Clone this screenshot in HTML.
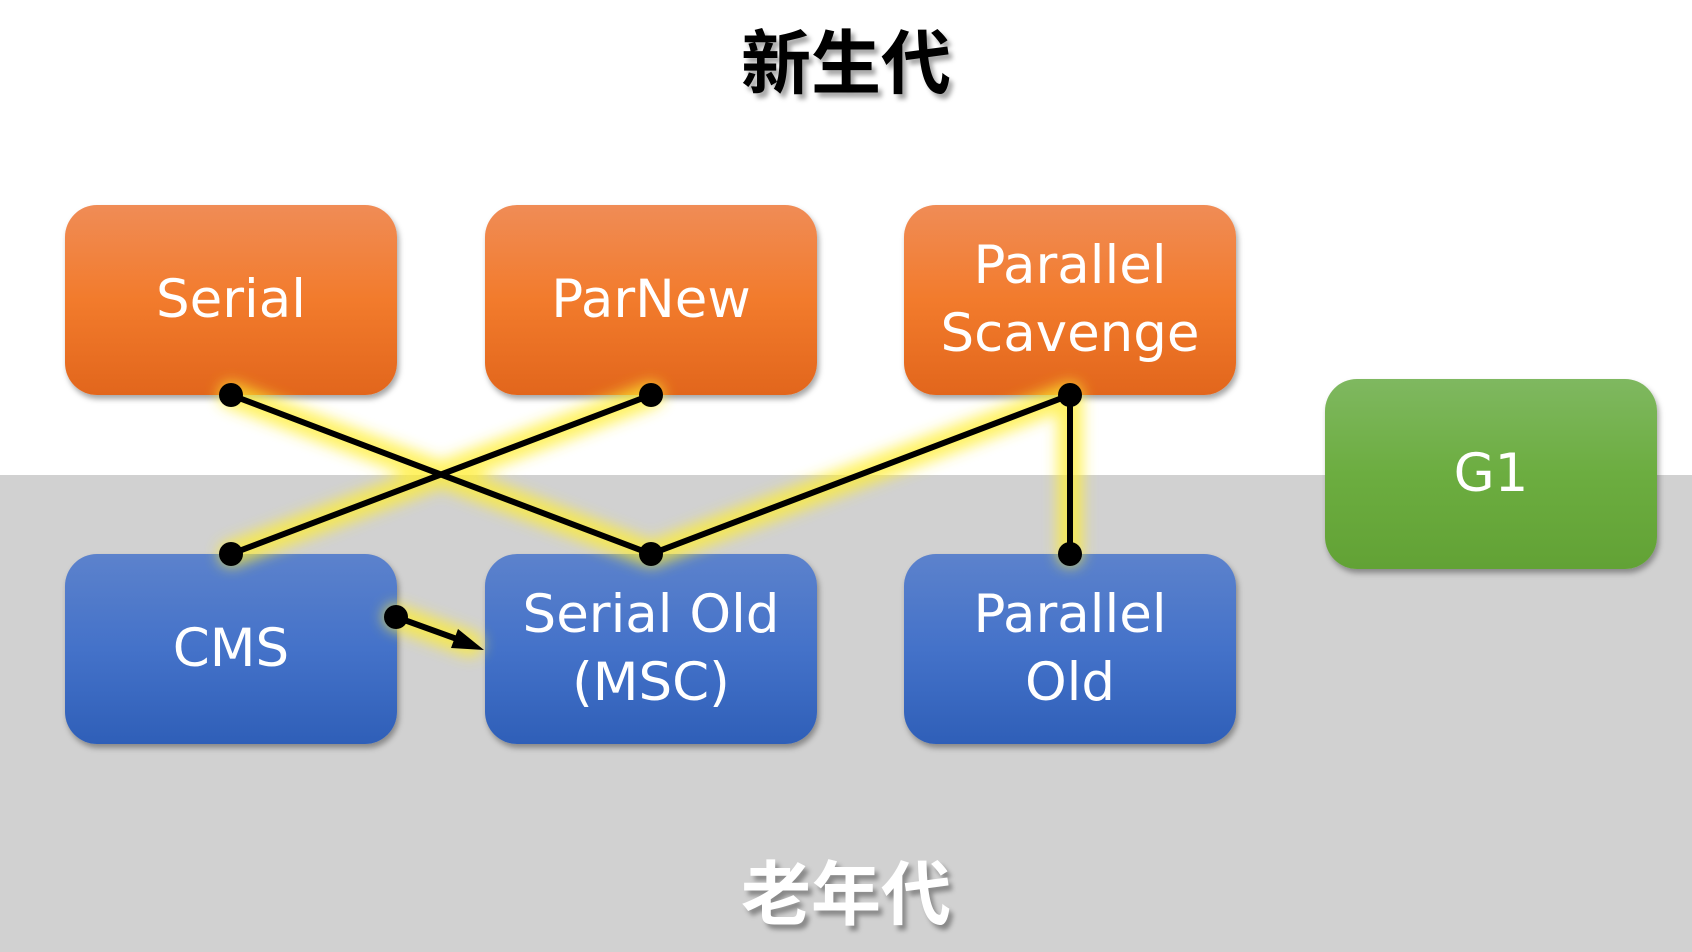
<!DOCTYPE html>
<html><head><meta charset="utf-8"><style>
*{margin:0;padding:0;box-sizing:border-box}
body{width:1692px;height:952px;position:relative;overflow:hidden;background:#fff;font-family:"Segoe UI","DejaVu Sans","Liberation Sans",sans-serif}
.gray{position:absolute;left:0;top:475px;width:1692px;height:477px;background:#d1d1d1}
.box{position:absolute;width:332px;height:190px;border-radius:32px;color:#fff;font-size:53px;line-height:68px;display:flex;align-items:center;justify-content:center;text-align:center;box-shadow:2px 4px 6px rgba(0,0,0,.35)}
.o{background:linear-gradient(#f08c56,#f27b2c 50%,#e2661c)}
.b{background:linear-gradient(#5c82cc,#4472c9 50%,#2f5fb8)}
.g{background:linear-gradient(#7fb860,#6cad40 50%,#62a235)}
.t{position:absolute;left:0;width:1692px;text-align:center;font-family:"Liberation Sans","Noto Sans CJK SC",sans-serif;font-weight:bold;font-size:70px}
svg{position:absolute;left:0;top:0}
</style></head><body>
<div class="gray"></div>
<div class="t" style="top:8px;color:#000;text-shadow:4px 5px 5px rgba(0,0,0,.35)">新生代</div>
<div class="t" style="top:839px;color:#fff;text-shadow:4px 5px 5px rgba(0,0,0,.35)">老年代</div>
<div class="box o" style="left:65px;top:205px">Serial</div>
<div class="box o" style="left:485px;top:205px">ParNew</div>
<div class="box o" style="left:904px;top:205px">Parallel<br>Scavenge</div>
<div class="box b" style="left:65px;top:554px">CMS</div>
<div class="box b" style="left:485px;top:554px">Serial Old<br>(MSC)</div>
<div class="box b" style="left:904px;top:554px">Parallel<br>Old</div>
<div class="box g" style="left:1325px;top:379px">G1</div>
<svg width="1692" height="952">
<defs><filter id="bl" x="-20%" y="-20%" width="140%" height="140%"><feGaussianBlur stdDeviation="7"/></filter></defs>
<g stroke="#ffee30" stroke-width="26" stroke-linecap="round" opacity=".75" filter="url(#bl)" fill="none">
<path d="M231 395L651 554M651 395L231 554M1070 395L651 554M1070 395L1070 554M396 617L470 644"/>
</g>
<g stroke="#000" stroke-width="6" fill="none">
<path d="M231 395L651 554M651 395L231 554M1070 395L651 554M1070 395L1070 554M396 617L468 643"/>
</g>
<g fill="#000">
<circle cx="231" cy="395" r="12"/><circle cx="651" cy="395" r="12"/><circle cx="1070" cy="395" r="12"/>
<circle cx="231" cy="554" r="12"/><circle cx="651" cy="554" r="12"/><circle cx="1070" cy="554" r="12"/>
<circle cx="396" cy="617" r="12"/>
<path d="M484 650L458 629L451 648Z"/>
</g>
</svg>
</body></html>
